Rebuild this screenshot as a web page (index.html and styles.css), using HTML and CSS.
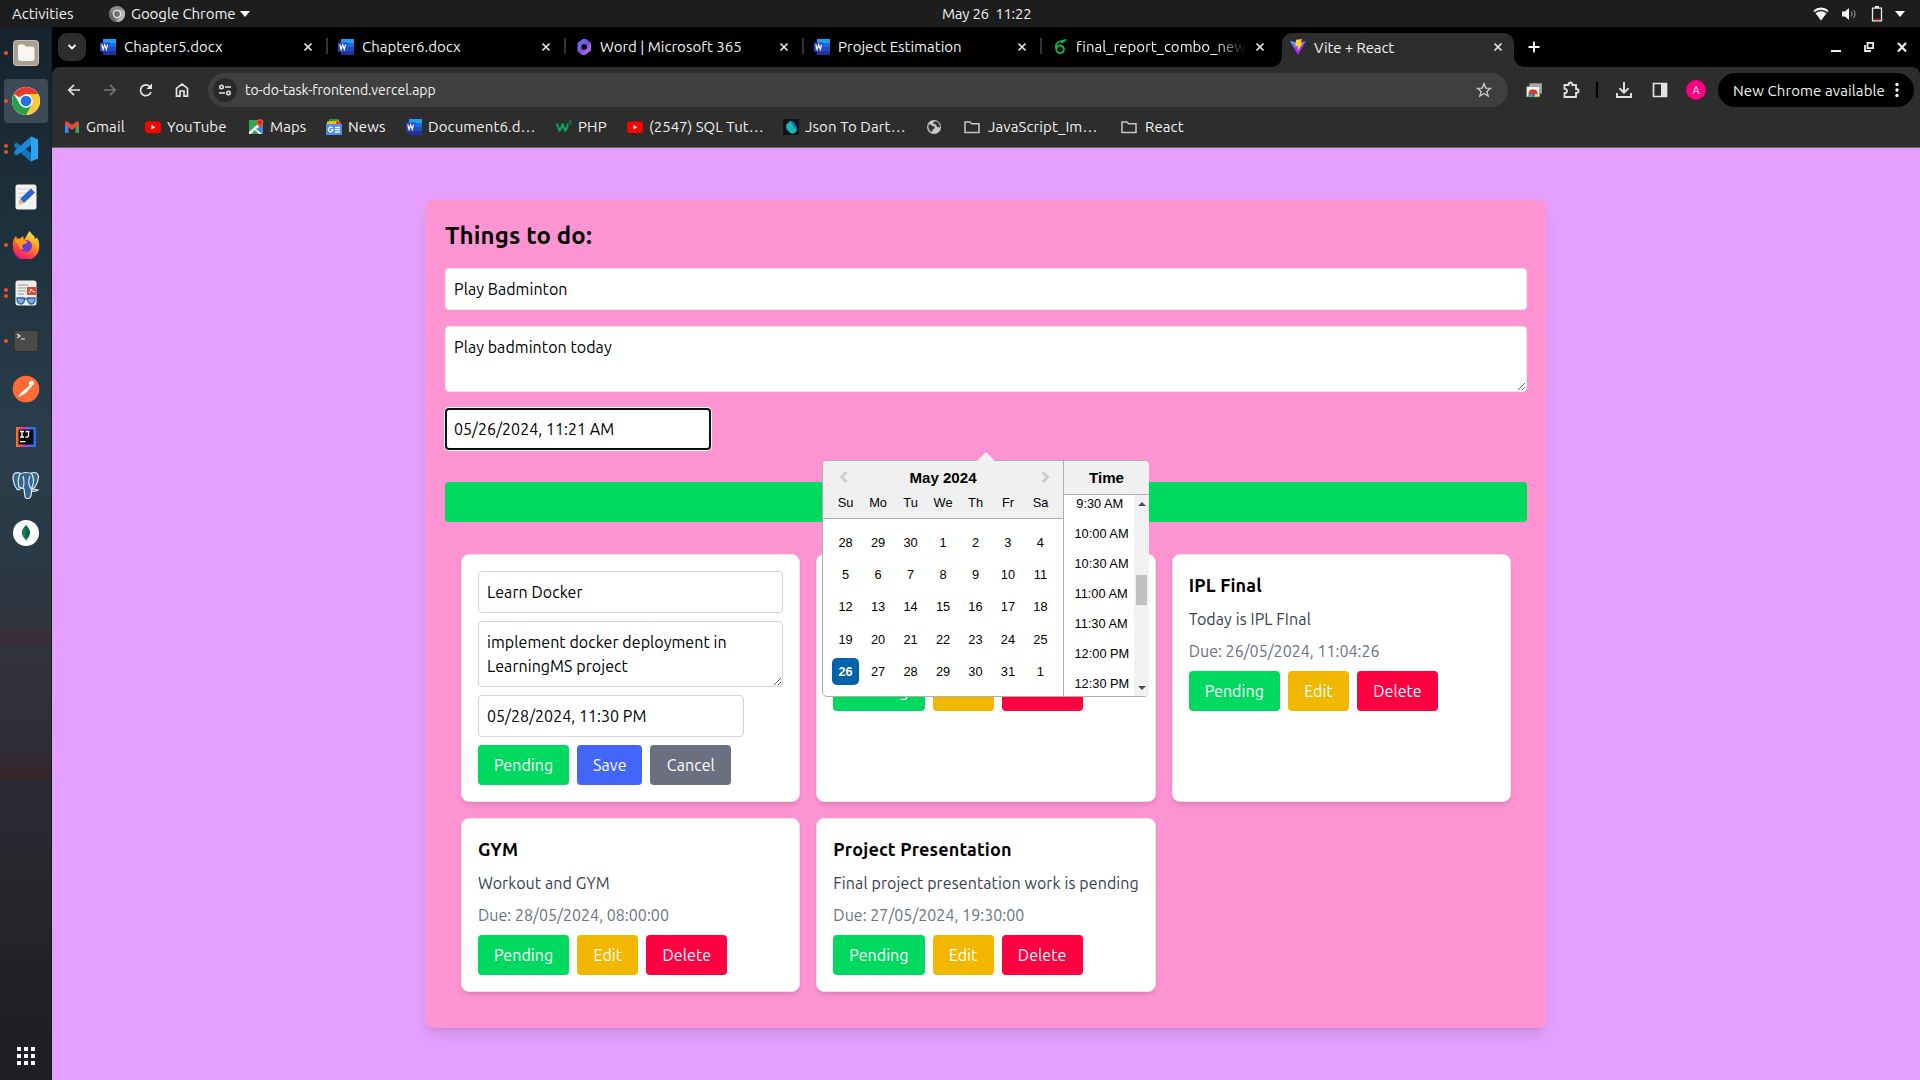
FILE: index.html
```html
<!DOCTYPE html>
<html lang="en">
<head>
<meta charset="utf-8">
<title>Vite + React</title>
<link rel="stylesheet" href="styles.css">
</head>
<body>
<svg class="defs" aria-hidden="true">
  <defs>
    <symbol id="word" viewBox="0 0 16 16"><path fill="#1b9ff0" d="M3 0h13v5H3z"/><path fill="#1a6fd8" d="M3 4h13v4.500H3z"/><path fill="#1c4fc0" d="M3 8h13v4H3z"/><path fill="#20309c" d="M3 12h13v4H3z"/><path fill="#2a48cc" d="M0 3.500h9.500v9H0z"/><path fill="none" stroke="#fff" stroke-width="1.200" d="M1.800 5.500l1.300 5 1.600-4.700 1.600 4.700 1.300-5"/></symbol>
    <symbol id="close" viewBox="0 0 10 10"><path fill="none" stroke="#e8e8e8" stroke-width="1.700" d="M1.500 1.500l7 7M8.500 1.500l-7 7"/></symbol>
    <symbol id="youtube" viewBox="0 0 16 16"><rect y="2.500" width="16" height="11.500" rx="3" fill="#f00"/><path fill="#fff" d="M6.500 6v4.600l3.800-2.300z"/></symbol>
    <symbol id="folder" viewBox="0 0 16 16"><path fill="none" stroke="#c7c7c7" stroke-width="1.500" d="M1 3h5l1.600 1.800H15V13.500H1z"/></symbol>
    <symbol id="chrome" viewBox="0 0 28 28"><circle cx="14" cy="14" r="14" fill="#fff"/><path fill="#e33b2e" d="M14 14L1.900 7A14 14 0 0 1 26.100 7H14z"/><path fill="#fcc934" d="M14 7h12.100A14 14 0 0 1 14 28l6-10.500z"/><path fill="#2c9e4b" d="M1.900 7A14 14 0 0 0 14 28l6-10.500-12 0z"/><circle cx="14" cy="14" r="6.800" fill="#fff"/><circle cx="14" cy="14" r="5.300" fill="#1a73e8"/></symbol>
  </defs>
</svg>

<header class="topbar">
  <span class="activities">Activities</span>
  <svg class="gray-chrome" viewBox="0 0 16 16"><circle cx="8" cy="8" r="8" fill="#8e8e8e"/><path fill="#686868" d="M1 4l4 7 3 5A8 8 0 0 1 1 4z"/><path fill="#b5b5b5" d="M8 4h7a8 8 0 0 1-7 12l3-6z"/><circle cx="8" cy="8" r="4" fill="#eee"/><circle cx="8" cy="8" r="2.900" fill="#707070"/></svg>
  <span class="app-name">Google Chrome</span>
  <svg class="caret" viewBox="0 0 10 6"><path fill="#fff" d="M0 0h10L5 6z"/></svg>
  <span class="clock">May 26&nbsp; 11:22</span>
  <div class="tray">
    <svg class="wifi" width="16" height="14" viewBox="0 0 16 14"><path fill="#8a8a8a" d="M0 4a12 12 0 0 1 16 0l-1.200 1.500a10.500 10.500 0 0 0-13.600 0z"/><path fill="#fff" d="M.8 3.200a11 11 0 0 1 14.400 0L14 4.700a9.500 9.500 0 0 0-12 0zM2.500 6.300a8.500 8.500 0 0 1 11 0L8 13.500z"/></svg>
    <svg width="16" height="14" viewBox="0 0 16 14"><path fill="#f2f2f2" d="M1 4.500h3L8 1v12L4 9.500H1z"/><path fill="none" stroke="#8b8b8b" stroke-width="1.200" d="M10 4.500q2 2.500 0 5M12.500 3q3 4 0 8"/></svg>
    <svg class="battery" width="12" height="16" viewBox="0 0 12 16"><path fill="none" stroke="#eee" stroke-width="1.300" d="M1.500 2.200h9v12.600h-9z"/><path fill="#eee" d="M4 0h4v2H4z"/><path fill="#c01c1c" d="M3 12.500h6v1.200H3z"/></svg>
    <svg class="caret" viewBox="0 0 10 6"><path fill="#fff" d="M0 0h10L5 6z"/></svg>
  </div>
</header>

<div class="desktop">
  <nav class="dock">
    <div class="launcher one"><svg viewBox="0 0 28 28"><rect x="1.500" y="1.500" width="25" height="25" rx="3" fill="#a9a190" stroke="#c9c2b4"/><path fill="#f7f6f3" d="M6 7.500q0-2 2-2h3.500q1.500 0 2 2H20q2.500 0 2.500 2.500v9q0 3-3 3H9q-3 0-3-3z"/></svg></div>
    <div class="launcher one active"><svg viewBox="0 0 28 28"><use href="#chrome"/></svg></div>
    <div class="launcher two"><svg viewBox="0 0 28 28"><path fill="#1675b8" d="M2 9.500l2.500-2L19 18v9L2.500 12z"/><path fill="#1a8ad4" d="M2 18.500l2.500 2L19 10V1.500L2.500 16z"/><path fill="#2ba6f5" d="M19 1.500l7 3v19l-7 3z"/></svg></div>
    <div class="launcher"><svg viewBox="0 0 28 28"><rect x="3.500" y="1.500" width="21" height="25" rx="2.500" fill="#f3f3f3"/><path stroke="#d2d2d2" d="M6 6h14M6 10h12M6 14h8M6 18h6"/><path fill="#2f62cc" d="M19 5.500l4 4L12 20l-4-4z"/><path fill="#e9b27d" d="M8 16l4 4-5.500 2z"/></svg></div>
    <div class="launcher one"><svg viewBox="0 0 28 28"><defs><linearGradient id="ff" x1=".8" y1="0" x2=".3" y2="1"><stop offset="0" stop-color="#fff44f"/><stop offset=".4" stop-color="#ff9a1f"/><stop offset=".75" stop-color="#ff3b4a"/><stop offset="1" stop-color="#e31587"/></linearGradient></defs><path fill="url(#ff)" d="M17.500 0q2 3 4.500 5l1 3 2-1.500q3 5 2 10A13 13 0 0 1 1 16Q0 9 4 5l1 2.500h3L11 5l1 4z"/><circle cx="14" cy="15" r="6" fill="#6b3ad0"/><path fill="#ff9a1f" d="M3 9q5-2 9 0 4 1 3 3l-4 1.500q-2 3 1 5-5 0-6-5z"/></svg></div>
    <div class="launcher two"><svg viewBox="0 0 28 28"><rect x="3.500" y="1.500" width="21" height="25" rx="2.500" fill="#eeeeea"/><path stroke="#9c9c90" d="M6 6h10M6 9h8M6 12h8M6 15h6"/><path fill="#df4434" d="M15 8h9v8h-9z"/><path fill="none" stroke="#fff" d="M17 14q2-2 2-4 1 3 4 3"/><path fill="#86acd9" stroke="#2f63a8" stroke-width="1.300" d="M5 19h7.500q0 6-3.800 6T5 19zM15.500 19H23q0 6-3.700 6t-3.800-6zM12.500 20h3"/></svg></div>
    <div class="launcher one"><svg viewBox="0 0 28 28"><rect x="2" y="3.500" width="24" height="21" rx="2.500" fill="#4a4a4a" stroke="#2e2e2e"/><path fill="none" stroke="#eee" stroke-width="1.200" d="M5 7l3 2-3 2M9 12h4"/></svg></div>
    <div class="launcher"><svg viewBox="0 0 28 28"><circle cx="14" cy="14" r="13.300" fill="#ff6c37"/><g fill="#fff"><circle cx="19.500" cy="8" r="2.500"/><path d="M18.500 9.500l1.500 1.500-6 7-5.500 3L6 22l2.500-3.500z"/></g></svg></div>
    <div class="launcher"><svg viewBox="0 0 28 28"><defs><linearGradient id="ij"><stop offset="0" stop-color="#f97a12"/><stop offset=".3" stop-color="#e2408c"/><stop offset=".65" stop-color="#6b57ff"/><stop offset="1" stop-color="#087cfa"/></linearGradient></defs><path fill="url(#ij)" d="M4 4h20v20H4z"/><path fill="#0a0a0a" d="M6.500 6.500h15v15h-15z"/><path fill="none" stroke="#fff" stroke-width="1.300" d="M8 8.500h4M10 8.500V14M8 14h4M13.500 8.500h4M16.500 8.500v4q0 2-3 1.500M8 18.700h5.500"/></svg></div>
    <div class="launcher"><svg viewBox="0 0 28 28"><g fill="#336791" stroke="#e6edf2" stroke-width="1.200"><path d="M8 2Q1 0 1 7q1 8 4 11 2 2 4-1Z"/><path d="M19 2q7-2 7.500 4-1 8-5.500 12l5 1q-3 2-6 1z"/><path d="M8 3q6-3 12 0 3 8 0 13l-1 9q-3 5-6 1l-1-8-5-2q-2-8 1-13z"/></g><path stroke="#e6edf2" stroke-width="1.200" fill="none" d="M11 5q2 7 0 12M18 5q-3 7 1 13"/></svg></div>
    <div class="launcher"><svg viewBox="0 0 28 28"><circle cx="14" cy="14" r="13" fill="#fff"/><path fill="#116149" d="M14 6q4.500 4.500 4 9-1 3.500-3.500 5.500l-.5 2-.5-2Q11 18.500 10 15q-.5-4.500 4-9z"/><path fill="#13aa52" d="M14 6q-4.500 4.500-4 9 1 3.500 3.500 5.500z" opacity=".45"/></svg></div>
    <div class="launcher apps"><svg viewBox="0 0 18 18"><path stroke="#fff" stroke-width="4" stroke-dasharray="4 3" d="M0 2h18M0 9h18M0 16h18"/></svg></div>
  </nav>

  <div class="browser">
    <div class="tabstrip">
      <div class="tab-search"><svg width="10" height="8" viewBox="0 0 10 8"><path fill="none" stroke="#fff" stroke-width="1.800" d="M1.500 2L5 5.500 8.500 2"/></svg></div>
      <div class="tab first"><svg class="fav"><use href="#word"/></svg><span>Chapter5.docx</span><svg class="x"><use href="#close"/></svg></div>
      <div class="tab"><svg class="fav"><use href="#word"/></svg><span>Chapter6.docx</span><svg class="x"><use href="#close"/></svg></div>
      <div class="tab"><svg class="fav" viewBox="0 0 16 16"><defs><linearGradient id="ms" x2="1" y2="1"><stop offset="0" stop-color="#5d8df5"/><stop offset=".5" stop-color="#7a4ae0"/><stop offset="1" stop-color="#e07ae8"/></linearGradient></defs><path fill="url(#ms)" fill-rule="evenodd" d="M7 0h3l5 4v7.500L9 16H6l-4.500-3.500V4zM8 5L5.500 6.500v3L8 11l3-1.500v-3z"/></svg><span>Word | Microsoft 365</span><svg class="x"><use href="#close"/></svg></div>
      <div class="tab"><svg class="fav"><use href="#word"/></svg><span>Project Estimation</span><svg class="x"><use href="#close"/></svg></div>
      <div class="tab plain"><svg class="fav" viewBox="0 0 16 16"><path fill="none" stroke="#12b24a" stroke-width="1.800" d="M4 8.500Q3 4 9 2l4-.8q-1 2-4 2.300M4 8q0 6 4 6t4-4q-1-3.500-4-3.500T4.200 10"/></svg><span class="faded">final_report_combo_new</span><svg class="x"><use href="#close"/></svg></div>
      <div class="tab current"><svg class="fav" viewBox="0 0 16 16"><defs><linearGradient id="vt" x2=".6" y2="1"><stop offset="0" stop-color="#35c5ff"/><stop offset=".5" stop-color="#8f4dfb"/><stop offset="1" stop-color="#d400ff"/></linearGradient></defs><path fill="url(#vt)" d="M0 2l8 1.500L16 2 8 16z"/><path fill="#ffd21f" d="M6 .8l6-.8-1.500 4L13 3.600 7.800 12l.2-5-2.600.5z"/></svg><span>Vite + React</span><svg class="x"><use href="#close"/></svg></div>
      <svg class="new-tab" viewBox="0 0 12 12"><path stroke="#fff" stroke-width="1.800" d="M6 .5v11M.5 6h11"/></svg>
      <div class="window-buttons">
        <svg width="12" height="12" viewBox="0 0 12 12"><path fill="#eee" d="M1 9h10v2H1z"/></svg>
        <svg width="12" height="12" viewBox="0 0 12 12"><path fill="none" stroke="#eee" stroke-width="1.800" d="M4.500 1.900h5.600v5.200H4.500zM2 4v6h6"/></svg>
        <svg width="12" height="12" viewBox="0 0 12 12"><path fill="none" stroke="#eee" stroke-width="2.200" d="M2 2l8 8.500M10 2l-8 8.500"/></svg>
      </div>
    </div>

    <div class="toolbar">
      <div class="nav">
        <svg viewBox="0 0 16 16"><path fill="none" stroke="#e3e3e3" stroke-width="1.700" d="M14 8H3M8 2.800L2.800 8 8 13.200"/></svg>
        <svg viewBox="0 0 16 16"><path fill="none" stroke="#777" stroke-width="1.700" d="M2 8h11M8 2.800L13.200 8 8 13.200"/></svg>
        <svg viewBox="0 0 16 16"><path fill="none" stroke="#e3e3e3" stroke-width="1.700" d="M13 10a5.400 5.400 0 1 1-.8-5"/><path fill="#e3e3e3" d="M14 1.500V7H8.500z"/></svg>
        <svg viewBox="0 0 16 16"><path fill="none" stroke="#e3e3e3" stroke-width="1.700" d="M2.500 14.200V6.300L8 2l5.500 4.300v7.900H10V9H6v5.200z"/></svg>
      </div>
      <div class="omnibox">
        <div class="tune"><svg width="14" height="14" viewBox="0 0 14 14"><g fill="none" stroke="#e3e3e3" stroke-width="1.600"><circle cx="3.500" cy="4" r="1.700"/><path d="M7 4h6M1 10h6"/><circle cx="10.500" cy="10" r="1.700"/></g></svg></div>
        <span class="url">to-do-task-frontend.vercel.app</span>
        <svg class="star" viewBox="0 0 16 16"><path fill="none" stroke="#c7c7c7" stroke-width="1.400" d="M8 1.700l1.800 4.400 4.700.3-3.600 3 1.200 4.600L8 11.500 3.900 14l1.200-4.600-3.600-3 4.700-.3z"/></svg>
      </div>
      <div class="extensions">
        <svg viewBox="0 0 16 16"><path fill="#aaa" d="M4 2h11v9H4z"/><path fill="#fff" stroke="#888" stroke-width=".6" d="M1.500 5H13v9H1.500z"/><path fill="#e33b2e" d="M3 11.500a4.200 4.200 0 0 1 8.400 0z"/><path fill="#2c9e4b" d="M3 11.500h2.500V14H3z"/><path fill="#fcc934" d="M9 11.500h2.400V14H9z"/><circle cx="7.200" cy="12.500" r="1.700" fill="#1a73e8"/></svg>
        <svg viewBox="0 0 18 18"><path fill="none" stroke="#e3e3e3" stroke-width="1.800" d="M2.500 4h4q0-2.500 1.900-2.500T10.300 4h3.700v4q2.600 0 2.600 1.900T14 11.800v4.200H2.500v-3.800Q5 12 5 9.900T2.500 7.800z"/></svg>
        <i class="divider"></i>
        <svg viewBox="0 0 18 18"><path fill="none" stroke="#e3e3e3" stroke-width="1.900" d="M9 1v10.500M4.500 7.200L9 11.600l4.500-4.400M1.900 12v4h14.200v-4"/></svg>
        <svg viewBox="0 0 18 18"><path fill="none" stroke="#e3e3e3" stroke-width="1.700" d="M2.500 2.500h13v13h-13z"/><path fill="#e3e3e3" d="M10 2h6v14h-6z"/></svg>
        <span class="avatar">A</span>
      </div>
      <div class="update"><span>New Chrome available</span><svg width="4" height="16" viewBox="0 0 4 16"><g fill="#fff"><circle cx="2" cy="2.500" r="1.700"/><circle cx="2" cy="8" r="1.700"/><circle cx="2" cy="13.500" r="1.700"/></g></svg></div>
    </div>

    <div class="bookmarks">
      <div class="bm w1"><svg viewBox="0 0 16 16"><path fill="#4285f4" d="M1 4l3.500 3v7H1z"/><path fill="#34a853" d="M11.500 7L15 4v10h-3.500z"/><path fill="#ea4335" d="M1 4q0-2.500 2.500-1.500L8 6l4.500-3.500Q15 1.500 15 4v1.500L8 11 1 5.500z"/></svg><span>Gmail</span></div>
      <div class="bm w2"><svg><use href="#youtube"/></svg><span>YouTube</span></div>
      <div class="bm w3"><svg viewBox="0 0 16 16"><path fill="#34a853" d="M1 1h14v14H1z"/><path fill="#4285f4" d="M8 10l7 5V7z"/><path fill="#fff" d="M1 13L12 3l2 3-6 4 6 5h-3l-4-4-4 4H1z"/><path fill="#ea4335" d="M8.500 3.500a3.500 3.500 0 0 1 7 0Q15 6 12 9 9 6 8.500 3.500z"/><circle cx="12" cy="3.500" r="1.200" fill="#8d1f17"/></svg><span>Maps</span></div>
      <div class="bm w4"><svg viewBox="0 0 16 16"><path fill="#0c9d58" d="M3 0h10v5H3z"/><path fill="#fbbc04" d="M1 2.500l12-1 1 4H1z"/><path fill="#ea4335" d="M10 2l5 1v3h-5z"/><path fill="#4c8bf5" d="M0 5h16v11H0z"/><path fill="none" stroke="#fff" stroke-width="1.300" d="M6.500 9A2.300 2.300 0 1 0 7 10.700H5M9 8.500h5M9 10.700h5M9 13h5"/></svg><span>News</span></div>
      <div class="bm w5"><svg><use href="#word"/></svg><span>Document6.d…</span></div>
      <div class="bm w6"><svg viewBox="0 0 16 16"><path fill="none" stroke="#0b9f60" stroke-width="2.200" d="M1 4.500q1 5 2.600 7 2-2 3-7 1 5 2.600 7Q11.500 9 12 4.500"/><path fill="none" stroke="#0b9f60" d="M13 2h2.200l-1.500 1.700q2 .3.800 2.300"/></svg><span>PHP</span></div>
      <div class="bm w7"><svg><use href="#youtube"/></svg><span>(2547) SQL Tut…</span></div>
      <div class="bm w8"><svg viewBox="0 0 16 16"><path fill="#111" d="M0 0h16v16H0z"/><path fill="#18b9b0" d="M3 6l4-4 4 1 3 6v3l-3 2.500H8L3 10z"/><path fill="#1667b8" d="M7 2l4 1 3 6v3z"/><path fill="#1667b8" d="M3 6v4l2 2z"/></svg><span>Json To Dart…</span></div>
      <div class="bm w9"><svg viewBox="0 0 16 16"><circle cx="8" cy="8" r="7" fill="#c7cacd"/><path fill="#333" d="M2.500 5.500q3-.5 4 1.500l2 .5q1 2-1.500 2.500L6 13Q3 12 2.500 9zM8 2.500l-1 2 3 1 1 2.500 3 .5Q14 4 10.500 2.500z"/></svg></div>
      <div class="bm w10"><svg><use href="#folder"/></svg><span>JavaScript_Im…</span></div>
      <div class="bm w11"><svg><use href="#folder"/></svg><span>React</span></div>
    </div>

    <main class="page">
      <section class="todo">
        <h1>Things to do:</h1>
        <input class="field" value="Play Badminton">
        <textarea class="field">Play badminton today</textarea>
        <div class="date-row">
          <input class="field date focused" value="05/26/2024, 11:21 AM">
          <div class="picker">
            <svg class="pointer" viewBox="0 0 18 9"><path fill="#f0f0f0" d="M0 9l9-9 9 9z"/></svg>
            <div class="calendar">
              <div class="cal-head">
                <div class="month"><svg viewBox="0 0 10 14"><path fill="none" stroke="#ccc" stroke-width="3" d="M8.500 2l-5 5 5 5"/></svg><b>May 2024</b><svg viewBox="0 0 10 14"><path fill="none" stroke="#ccc" stroke-width="3" d="M1.500 2l5 5-5 5"/></svg></div>
                <div class="week names"><span>Su</span><span>Mo</span><span>Tu</span><span>We</span><span>Th</span><span>Fr</span><span>Sa</span></div>
              </div>
              <div class="days">
                <div class="week"><span>28</span><span>29</span><span>30</span><span>1</span><span>2</span><span>3</span><span>4</span></div>
                <div class="week"><span>5</span><span>6</span><span>7</span><span>8</span><span>9</span><span>10</span><span>11</span></div>
                <div class="week"><span>12</span><span>13</span><span>14</span><span>15</span><span>16</span><span>17</span><span>18</span></div>
                <div class="week"><span>19</span><span>20</span><span>21</span><span>22</span><span>23</span><span>24</span><span>25</span></div>
                <div class="week"><span class="selected">26</span><span>27</span><span>28</span><span>29</span><span>30</span><span>31</span><span>1</span></div>
              </div>
            </div>
            <div class="time">
              <div class="time-head">Time</div>
              <div class="time-body">
                <ul><li>9:30 AM</li><li>10:00 AM</li><li>10:30 AM</li><li>11:00 AM</li><li>11:30 AM</li><li>12:00 PM</li><li>12:30 PM</li></ul>
                <div class="scrollbar"><svg viewBox="0 0 8 4"><path fill="#505050" d="M0 4l4-4 4 4z"/></svg><i></i><svg viewBox="0 0 8 4"><path fill="#505050" d="M0 0h8L4 4z"/></svg></div>
              </div>
            </div>
          </div>
        </div>
        <button class="add" aria-label="Add"></button>
        <div class="cards">
          <article class="card editing">
            <input class="field" value="Learn Docker">
            <textarea class="field">implement docker deployment in LearningMS project</textarea>
            <input class="field date" value="05/28/2024, 11:30 PM">
            <div class="actions"><button class="pending">Pending</button><button class="save">Save</button><button class="cancel">Cancel</button></div>
          </article>
          <article class="card covered">
            <div class="actions"><button class="pending">Pending</button><button class="edit">Edit</button><button class="delete">Delete</button></div>
          </article>
          <article class="card">
            <h2>IPL Final</h2><p>Today is IPL FInal</p><p class="due">Due: 26/05/2024, 11:04:26</p>
            <div class="actions"><button class="pending">Pending</button><button class="edit">Edit</button><button class="delete">Delete</button></div>
          </article>
          <article class="card">
            <h2>GYM</h2><p>Workout and GYM</p><p class="due">Due: 28/05/2024, 08:00:00</p>
            <div class="actions"><button class="pending">Pending</button><button class="edit">Edit</button><button class="delete">Delete</button></div>
          </article>
          <article class="card">
            <h2>Project Presentation</h2><p>Final project presentation work is pending</p><p class="due">Due: 27/05/2024, 19:30:00</p>
            <div class="actions"><button class="pending">Pending</button><button class="edit">Edit</button><button class="delete">Delete</button></div>
          </article>
        </div>
      </section>
    </main>
  </div>
</div>
</body>
</html>
```
FILE: styles.css
```css
* { box-sizing: border-box; }
body { margin: 0; width: 1920px; height: 1080px; overflow: hidden; display: flex; flex-direction: column; font-family: Ubuntu, "Noto Sans", sans-serif; font-size: 15px; font-variant-ligatures: none; color: #f2f2f2; }
svg { display: block; flex: none; }
span { white-space: nowrap; }
.defs { display: none; }

.topbar { height: 27px; background: #1d1d1d; display: flex; align-items: center; padding: 0 15px 0 12px; flex: none; }
.activities { width: 97px; }
.gray-chrome { width: 16px; height: 16px; margin-right: 6px; }
.app-name { width: 109px; letter-spacing: -.05px; }
.caret { width: 10px; height: 6px; }
.clock { margin-left: 692px; flex: 1; letter-spacing: -.25px; padding-bottom: 1px; }
.tray { display: flex; align-items: center; gap: 13px; }
.wifi { margin-right: -1px; }
.battery { margin: 0 -1px 0 1px; }

.desktop { flex: 1; display: flex; min-height: 0; }
.dock { width: 52px; flex: none; display: flex; flex-direction: column; gap: 4px; padding: 4px; background: linear-gradient(#17232e 0, #1d303c 190px, #2b3e4b 420px, #293945 530px, #31343f 600px, #3c2a34 612px, #31323e 622px, #2d2e39 720px, #38232a 748px, #2b2a33 756px, #28262c 860px, #231f27 960px, #211d24 100%); border-right: 1px solid #141b22; }
.launcher { height: 44px; width: 44px; border-radius: 4px; display: flex; align-items: center; flex: none; }
.launcher svg { width: 28px; height: 28px; margin-left: 4px; }
.launcher::before { content: ""; width: 4px; height: 4px; border-radius: 2px; }
.launcher.one::before, .launcher.two::before { background: #e95420; }
.launcher.two::before { box-shadow: 0 6px #e95420; margin-top: -6px; }
.launcher.active { background: #3e4a55; }
.launcher.apps { margin-top: auto; margin-bottom: -2px; }
.launcher.apps svg { width: 18px; height: 18px; margin-left: 9px; }

.browser { flex: 1; min-width: 0; display: flex; flex-direction: column; background: #000; }
.tabstrip { height: 40px; display: flex; align-items: center; padding: 0 12px 0 6px; flex: none; }
.tab-search { width: 28px; height: 28px; border-radius: 9px; background: #2d2d2d; display: grid; place-items: center; margin-bottom: 1px; }
.tab { width: 238px; height: 34px; display: flex; align-items: center; padding: 0 15px 0 10px; font-size: 15px; margin-bottom: 1px; position: relative; }
.tab.first { margin-left: 4px; }
.tab span { flex: 1; margin-left: 8px; overflow: hidden; }
.tab::after { content: ""; position: absolute; right: 0; top: 8px; width: 2px; height: 16px; background: #333; }
.tab.plain::after { display: none; }
.fav { width: 16px; height: 16px; }
.x { width: 10px; height: 10px; }
.faded { -webkit-mask-image: linear-gradient(90deg, #000 140px, transparent 170px); }
.tab.plain span { margin-right: 8px; }
.tab.current { width: 232px; height: 34px; background: #2d2d2d; border-radius: 10px 10px 0 0; align-self: flex-end; margin: 0 0 0 2px; padding: 0 11px 6px 8px; }
.tab.current span { letter-spacing: -.1px; }
.tab.current::before, .tab.current::after { content: ""; position: absolute; top: auto; bottom: 0; width: 10px; height: 10px; }
.tab.current::before { left: -10px; background: radial-gradient(circle at 0 0, transparent 9.500px, #2d2d2d 10px); }
.tab.current::after { right: -10px; background: radial-gradient(circle at 100% 0, transparent 9.500px, #2d2d2d 10px); }
.new-tab { width: 12px; height: 12px; margin-left: 14px; }
.window-buttons { margin-left: auto; display: flex; gap: 21px; }

.toolbar { height: 46px; display: flex; align-items: center; padding: 0 6px 0 14px; flex: none; background: #2d2d2d; border-radius: 8px 8px 0 0; }
.nav { display: flex; gap: 20px; margin-right: 18px; }
.nav svg { width: 16px; height: 16px; }
.omnibox { width: 1300px; height: 34px; border-radius: 17px; background: #3f3f3f; display: flex; align-items: center; padding: 0 16px 0 5px; }
.tune { width: 24px; height: 24px; border-radius: 12px; background: #2a2a2a; display: grid; place-items: center; margin-right: 8px; }
.url { flex: 1; font-size: 14px; letter-spacing: -.05px; }
.star { width: 16px; height: 16px; }
.extensions { display: flex; align-items: center; margin-left: 17px; }
.extensions svg { width: 18px; height: 18px; }
.extensions svg + svg { margin-left: 19px; }
.divider { width: 2px; height: 16px; background: #000; margin: 0 17px 0 16px; }
.divider + svg + svg { margin-left: 18px !important; }
.avatar { width: 20px; height: 20px; border-radius: 10px; background: #ff0080; font-size: 11px; display: grid; place-items: center; margin-left: 17px; }
.update { width: 196px; height: 34px; border-radius: 17px; background: #000; margin-left: auto; display: flex; align-items: center; justify-content: space-between; padding: 0 15px; letter-spacing: .1px; }

.bookmarks { height: 35px; display: flex; align-items: center; padding: 0 0 7px 12px; background: #2d2d2d; border-bottom: 1px solid #666; letter-spacing: .1px; flex: none; }
.bm { display: flex; align-items: center; gap: 6px; }
.bm svg { width: 16px; height: 16px; }
.w1 { width: 81px; } .w2 { width: 103px; } .w3 { width: 78px; } .w4 { width: 80px; } .w5 { width: 150px; } .w6 { width: 71px; } .w7 { width: 156px; letter-spacing: 0; } .w8 { width: 143px; } .w9 { width: 38px; } .w10 { width: 157px; gap: 8px; } .w11 { gap: 8px; }

.page { flex: 1; background: #e5a0ff; padding: 52px 373px 0; color: #000; font-size: 16px; line-height: 24px; letter-spacing: .07px; }
.todo { width: 1122px; background: #ff94d3; border-radius: 8px; padding: 20px; box-shadow: 0 10px 15px -3px rgba(0,0,0,.1), 0 4px 6px -4px rgba(0,0,0,.1); display: flex; flex-direction: column; }
h1, h2, p { margin: 0; }
h1 { font-size: 24px; line-height: 32px; font-weight: 700; letter-spacing: .14px; margin-bottom: 16px; }
.field { display: block; width: 100%; height: 42px; margin: 0 0 16px; padding: 8px; border: 1px solid #e5e7eb; border-radius: 4px; background: #fff; color: #000; font: inherit; letter-spacing: .06px; }
textarea.field { height: 66px; resize: vertical; overflow: hidden; }
.date-row { height: 74px; position: relative; }
.field.date { width: 266px; letter-spacing: .03px; }
.focused { border: 2px solid #101010; padding: 7px; box-shadow: 0 0 0 1px #fff; outline: none; }
.add { height: 40px; border: 0; border-radius: 4px; background: #00d95f; margin-bottom: 16px; }

.cards { display: grid; grid-template-columns: repeat(3, 1fr); gap: 16px; padding: 16px; margin-bottom: -16px; padding-bottom: 32px; }
.card { background: #fff; border: 1px solid #e5e7eb; border-radius: 8px; padding: 16px; box-shadow: 0 4px 6px -1px rgba(0,0,0,.1), 0 2px 4px -2px rgba(0,0,0,.1); min-width: 0; }
.card .field { border-color: #d1d5db; margin-bottom: 8px; }
.covered { padding-top: 116px; }
h2 { font-size: 18px; line-height: 28px; font-weight: 700; letter-spacing: .14px; margin-bottom: 8px; }
p { color: #374151; margin-bottom: 8px; white-space: nowrap; letter-spacing: .1px; }
.due { color: #6b7280; letter-spacing: .02px; }
.actions { display: flex; gap: 8px; }
.actions button { height: 40px; border: 0; border-radius: 4px; padding: 0; color: #fff; font: inherit; letter-spacing: .06px; }
.actions .pending { width: 91.300px; background: #00d95f; }
.actions .save { width: 65px; background: #4266fa; }
.actions .cancel { width: 81px; background: #6a7080; }
.actions .edit { width: 61px; background: #f2b700; }
.actions .delete { width: 81px; background: #ff0040; }

.picker { position: absolute; left: 377px; top: 52px; z-index: 2; width: 327px; height: 237px; border: 1px solid #aeaeae; border-radius: 5px; background: #fff; display: flex; font: 12.800px/27px "Liberation Sans", Arial, sans-serif; letter-spacing: 0; }
.pointer { position: absolute; left: 154px; top: -9px; width: 18px; height: 9px; }
.calendar { width: 240px; }
.cal-head { height: 58px; background: #f0f0f0; border-bottom: 1px solid #aeaeae; border-radius: 4px 0 0; padding: 6px 6px 0; }
.month { height: 20px; display: flex; align-items: center; justify-content: space-between; padding: 0 6px 0 9px; font-size: 15.100px; margin-bottom: 2px; }
.month b { margin-right: 3px; }
.month svg { width: 10px; height: 14px; }
.week { display: flex; gap: 5.300px; text-align: center; }
.week span { width: 27.200px; height: 27.200px; border-radius: 5px; }
.names { padding-left: 3px; }
.days { padding: 9.600px 9px; display: flex; flex-direction: column; gap: 5.200px; }
.days .selected { background: #0062a9; color: #fff; font-weight: 700; }
.time { width: 86px; border-left: 1px solid #aeaeae; }
.time-head { height: 34px; background: #f0f0f0; border-bottom: 1px solid #aeaeae; border-radius: 0 4px 0 0; text-align: center; font-weight: 700; font-size: 15.100px; line-height: 33px; }
.time-body { height: 201px; display: flex; overflow: hidden; }
.time ul { list-style: none; margin: -6px 0 0; padding: 0; width: 70px; }
.time li { height: 30px; padding: 5px 9px 5px 10.500px; line-height: 20px; white-space: nowrap; text-align: center; }
.scrollbar { width: 15px; background: #f1f1f1; display: flex; flex-direction: column; align-items: center; padding: 7px 0 6px; border-radius: 0 0 4px; }
.scrollbar svg { width: 8px; height: 4px; }
.scrollbar i { width: 11px; height: 30px; background: #c1c1c1; margin: 69px 0 auto; }
```
